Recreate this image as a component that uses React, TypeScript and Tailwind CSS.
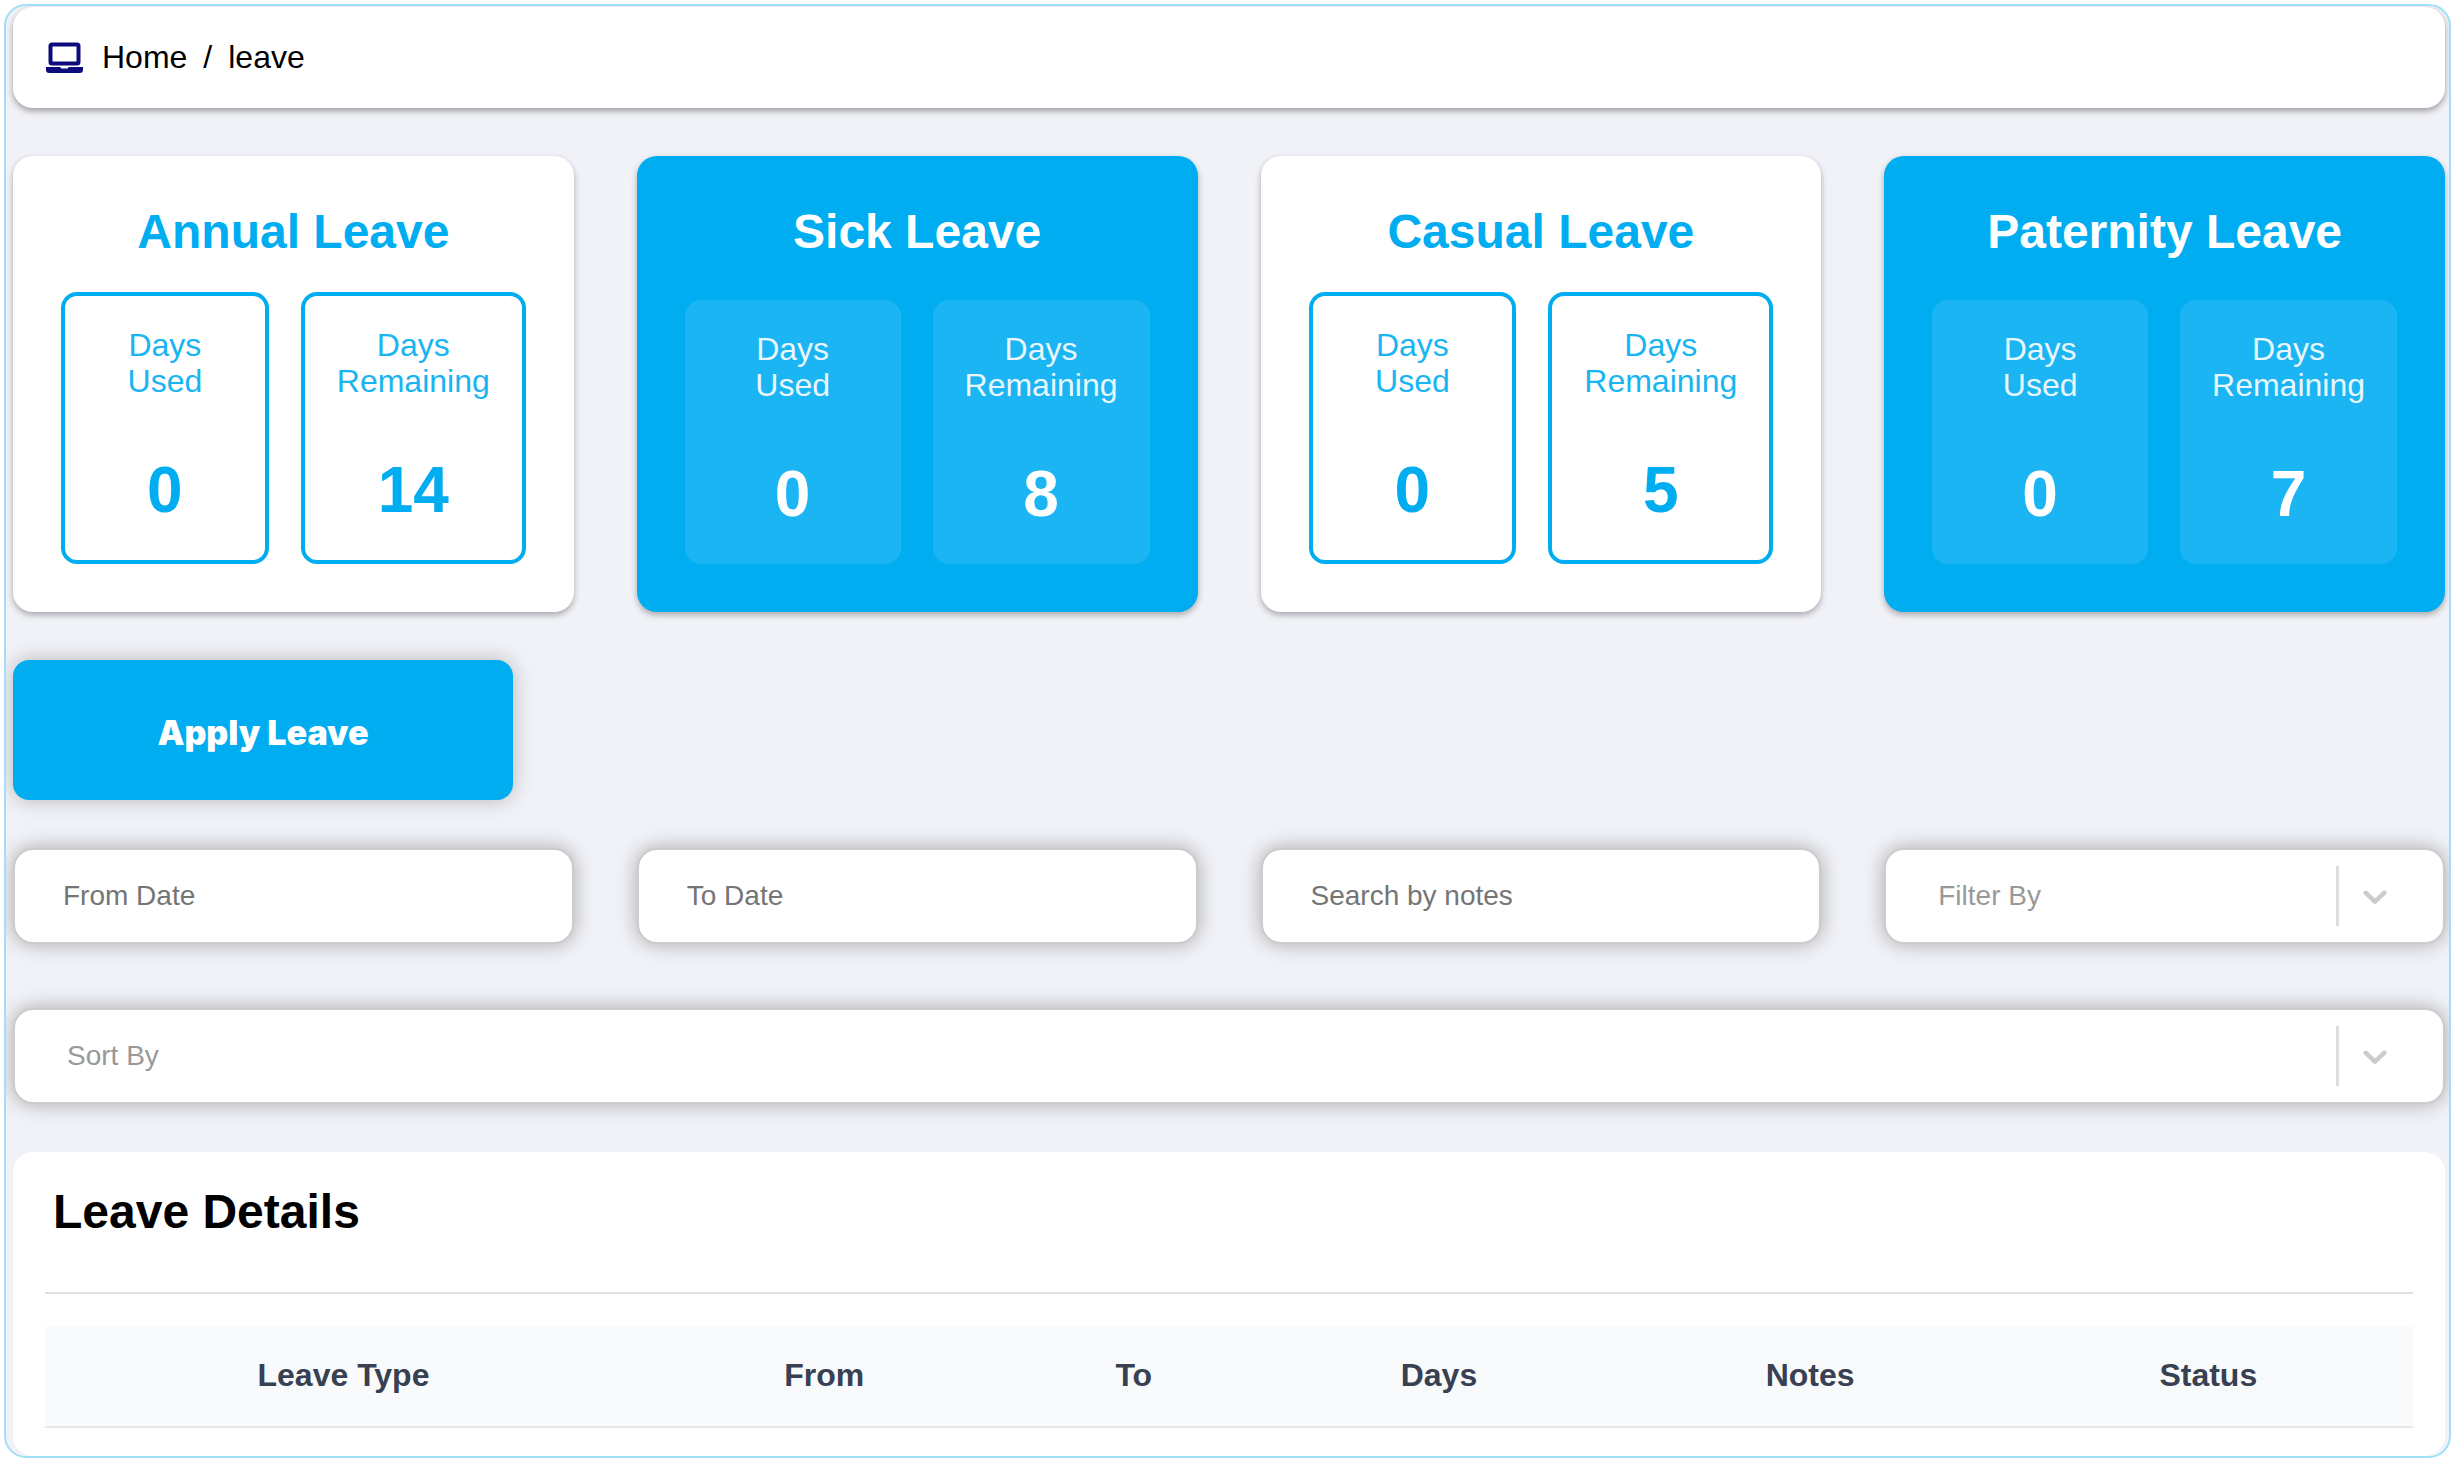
const leaves = [
  { title: 'Annual Leave', used: 0, remaining: 14 },
  { title: 'Sick Leave', used: 0, remaining: 8 },
  { title: 'Casual Leave', used: 0, remaining: 5 },
  { title: 'Paternity Leave', used: 0, remaining: 7 },
];

const columns = ['Leave Type', 'From', 'To', 'Days', 'Notes', 'Status'];

const fieldClass =
  'w-full min-w-0 h-24 rounded-[20px] border-2 border-[#cccccc] bg-white px-12 text-[28px] shadow-[0_0_20px_rgba(0,0,0,0.3)] outline-none';

const LaptopIcon = () => (
  <svg viewBox="0 0 41 36" className="h-9 w-[41px]" fill="none" aria-hidden="true">
    <rect x="5.500" y="4.500" width="28" height="19" rx="1.500" stroke="#0c0c7c" strokeWidth="4" />
    <path
      d="M1 27h14.500c0 1 .7 1.600 1.700 1.600h4.600c1 0 1.700-.6 1.700-1.600H38v2.700a3.300 3.300 0 0 1-3.300 3.300H4.300A3.300 3.300 0 0 1 1 29.700z"
      fill="#0c0c7c"
    />
  </svg>
);

const DaysBox = ({ label, value, filled }: { label: string; value: number; filled: boolean }) => (
  <div
    className={`flex-1 rounded-2xl px-8 pt-[31px] pb-[33px] text-center ${
      filled ? 'bg-white/10 text-white' : 'border-4 border-[#00adf1] text-[#00adf1]'
    }`}
  >
    <p className="text-[32px] leading-9 opacity-90">
      Days
      <br />
      {label}
    </p>
    <p className="mt-[54px] text-[64px] leading-[74px] font-bold">{value}</p>
  </div>
);

const LeaveCard = ({ leave, filled }: { leave: (typeof leaves)[number]; filled: boolean }) => (
  <div
    className={`flex flex-col rounded-[20px] p-12 shadow-[0_3px_6px_rgba(0,0,0,0.3)] ${
      filled ? 'bg-[#00adf1] text-white' : 'bg-white text-[#00adf1]'
    }`}
  >
    <h2 className="mb-[33px] text-center text-[48px] leading-[55px] font-bold">{leave.title}</h2>
    <div className="mt-auto flex gap-8">
      <DaysBox label="Used" value={leave.used} filled={filled} />
      <DaysBox label="Remaining" value={leave.remaining} filled={filled} />
    </div>
  </div>
);

const SelectField = ({ label, options }: { label: string; options: string[] }) => (
  <div className="relative">
    <select aria-label={label} defaultValue="" className={`${fieldClass} appearance-none pl-[52px] text-[#999999]`}>
      <option value="">{label}</option>
      {options.map((option) => (
        <option key={option}>{option}</option>
      ))}
    </select>
    {/* Divider and arrow */}
    <div className="pointer-events-none absolute inset-y-0 right-[50px] flex items-center gap-4">
      <span className="h-[60px] w-[3px] bg-[#dddddd]"></span>
      <svg viewBox="0 0 20 20" className="h-10 w-10 fill-[#cccccc]">
        <path d="M4.516 7.548c0.436-0.446 1.043-0.481 1.576 0l3.908 3.747 3.908-3.747c0.533-0.481 1.141-0.446 1.574 0 0.436 0.445 0.408 1.197 0 1.615-0.406 0.418-4.695 4.502-4.695 4.502-0.217 0.223-0.502 0.335-0.787 0.335s-0.57-0.112-0.789-0.335c0 0-4.287-4.084-4.695-4.502s-0.436-1.17 0-1.615z" />
      </svg>
    </div>
  </div>
);

export default function App() {
  return (
    <div className="min-h-screen bg-white p-1 font-['Liberation_Sans',Arial,sans-serif]">
      <div className="min-h-[calc(100vh-8px)] overflow-hidden rounded-[22px] border-2 border-[#9fdff8] bg-[#f1f2f7] pt-px pr-1 pl-[7px]">
        {/* Breadcrumb */}
        <nav
          aria-label="Breadcrumb"
          className="flex items-center gap-4 rounded-[20px] bg-white p-8 text-[32px] leading-[37px] text-black shadow-[0_3px_6px_rgba(0,0,0,0.35)]"
        >
          <LaptopIcon />
          <a href="#home">Home</a>
          <span>/</span>
          <a href="#leave">leave</a>
        </nav>

        {/* Leave balance */}
        <section className="mt-12 grid grid-cols-4 gap-[63px]">
          {leaves.map((leave, index) => (
            <LeaveCard key={leave.title} leave={leave} filled={index % 2 === 1} />
          ))}
        </section>

        <button
          type="button"
          className="mt-12 block h-[140px] w-[500px] rounded-2xl bg-[#00adf1] pt-1 font-[Inter,sans-serif] text-[34px] font-black text-white shadow-[0_0_20px_rgba(0,0,0,0.25)]"
        >
          Apply Leave
        </button>

        {/* Filters */}
        <section className="mt-12 grid grid-cols-4 gap-x-[63px] gap-y-16">
          <input aria-label="From Date" placeholder="From Date" className={`${fieldClass} placeholder:text-[#757575]`} />
          <input aria-label="To Date" placeholder="To Date" className={`${fieldClass} placeholder:text-[#757575]`} />
          <input
            aria-label="Search by notes"
            placeholder="Search by notes"
            className={`${fieldClass} placeholder:text-[#757575]`}
          />
          <SelectField label="Filter By" options={['Approved', 'Pending', 'Rejected']} />
          <div className="col-span-4">
            <SelectField label="Sort By" options={['Newest', 'Oldest']} />
          </div>
        </section>

        {/* Leave table */}
        <section className="mt-12 rounded-[20px] bg-white px-8 pt-8 pb-7">
          <h2 className="mb-[53px] px-2 text-[48px] leading-[55px] font-bold text-black">Leave Details</h2>
          <div className="border-t-2 border-[#e0e0e0] pt-8">
            <table className="w-full text-[32px] leading-[37px] text-[#374151]">
              <thead>
                <tr className="border-b-2 border-[#e5e7eb] bg-[#f9fafb]">
                  {columns.map((column) => (
                    <th key={column} className="px-8 pt-[31px] pb-8 text-center font-bold">
                      {column}
                    </th>
                  ))}
                </tr>
              </thead>
            </table>
          </div>
        </section>
      </div>
    </div>
  );
}
